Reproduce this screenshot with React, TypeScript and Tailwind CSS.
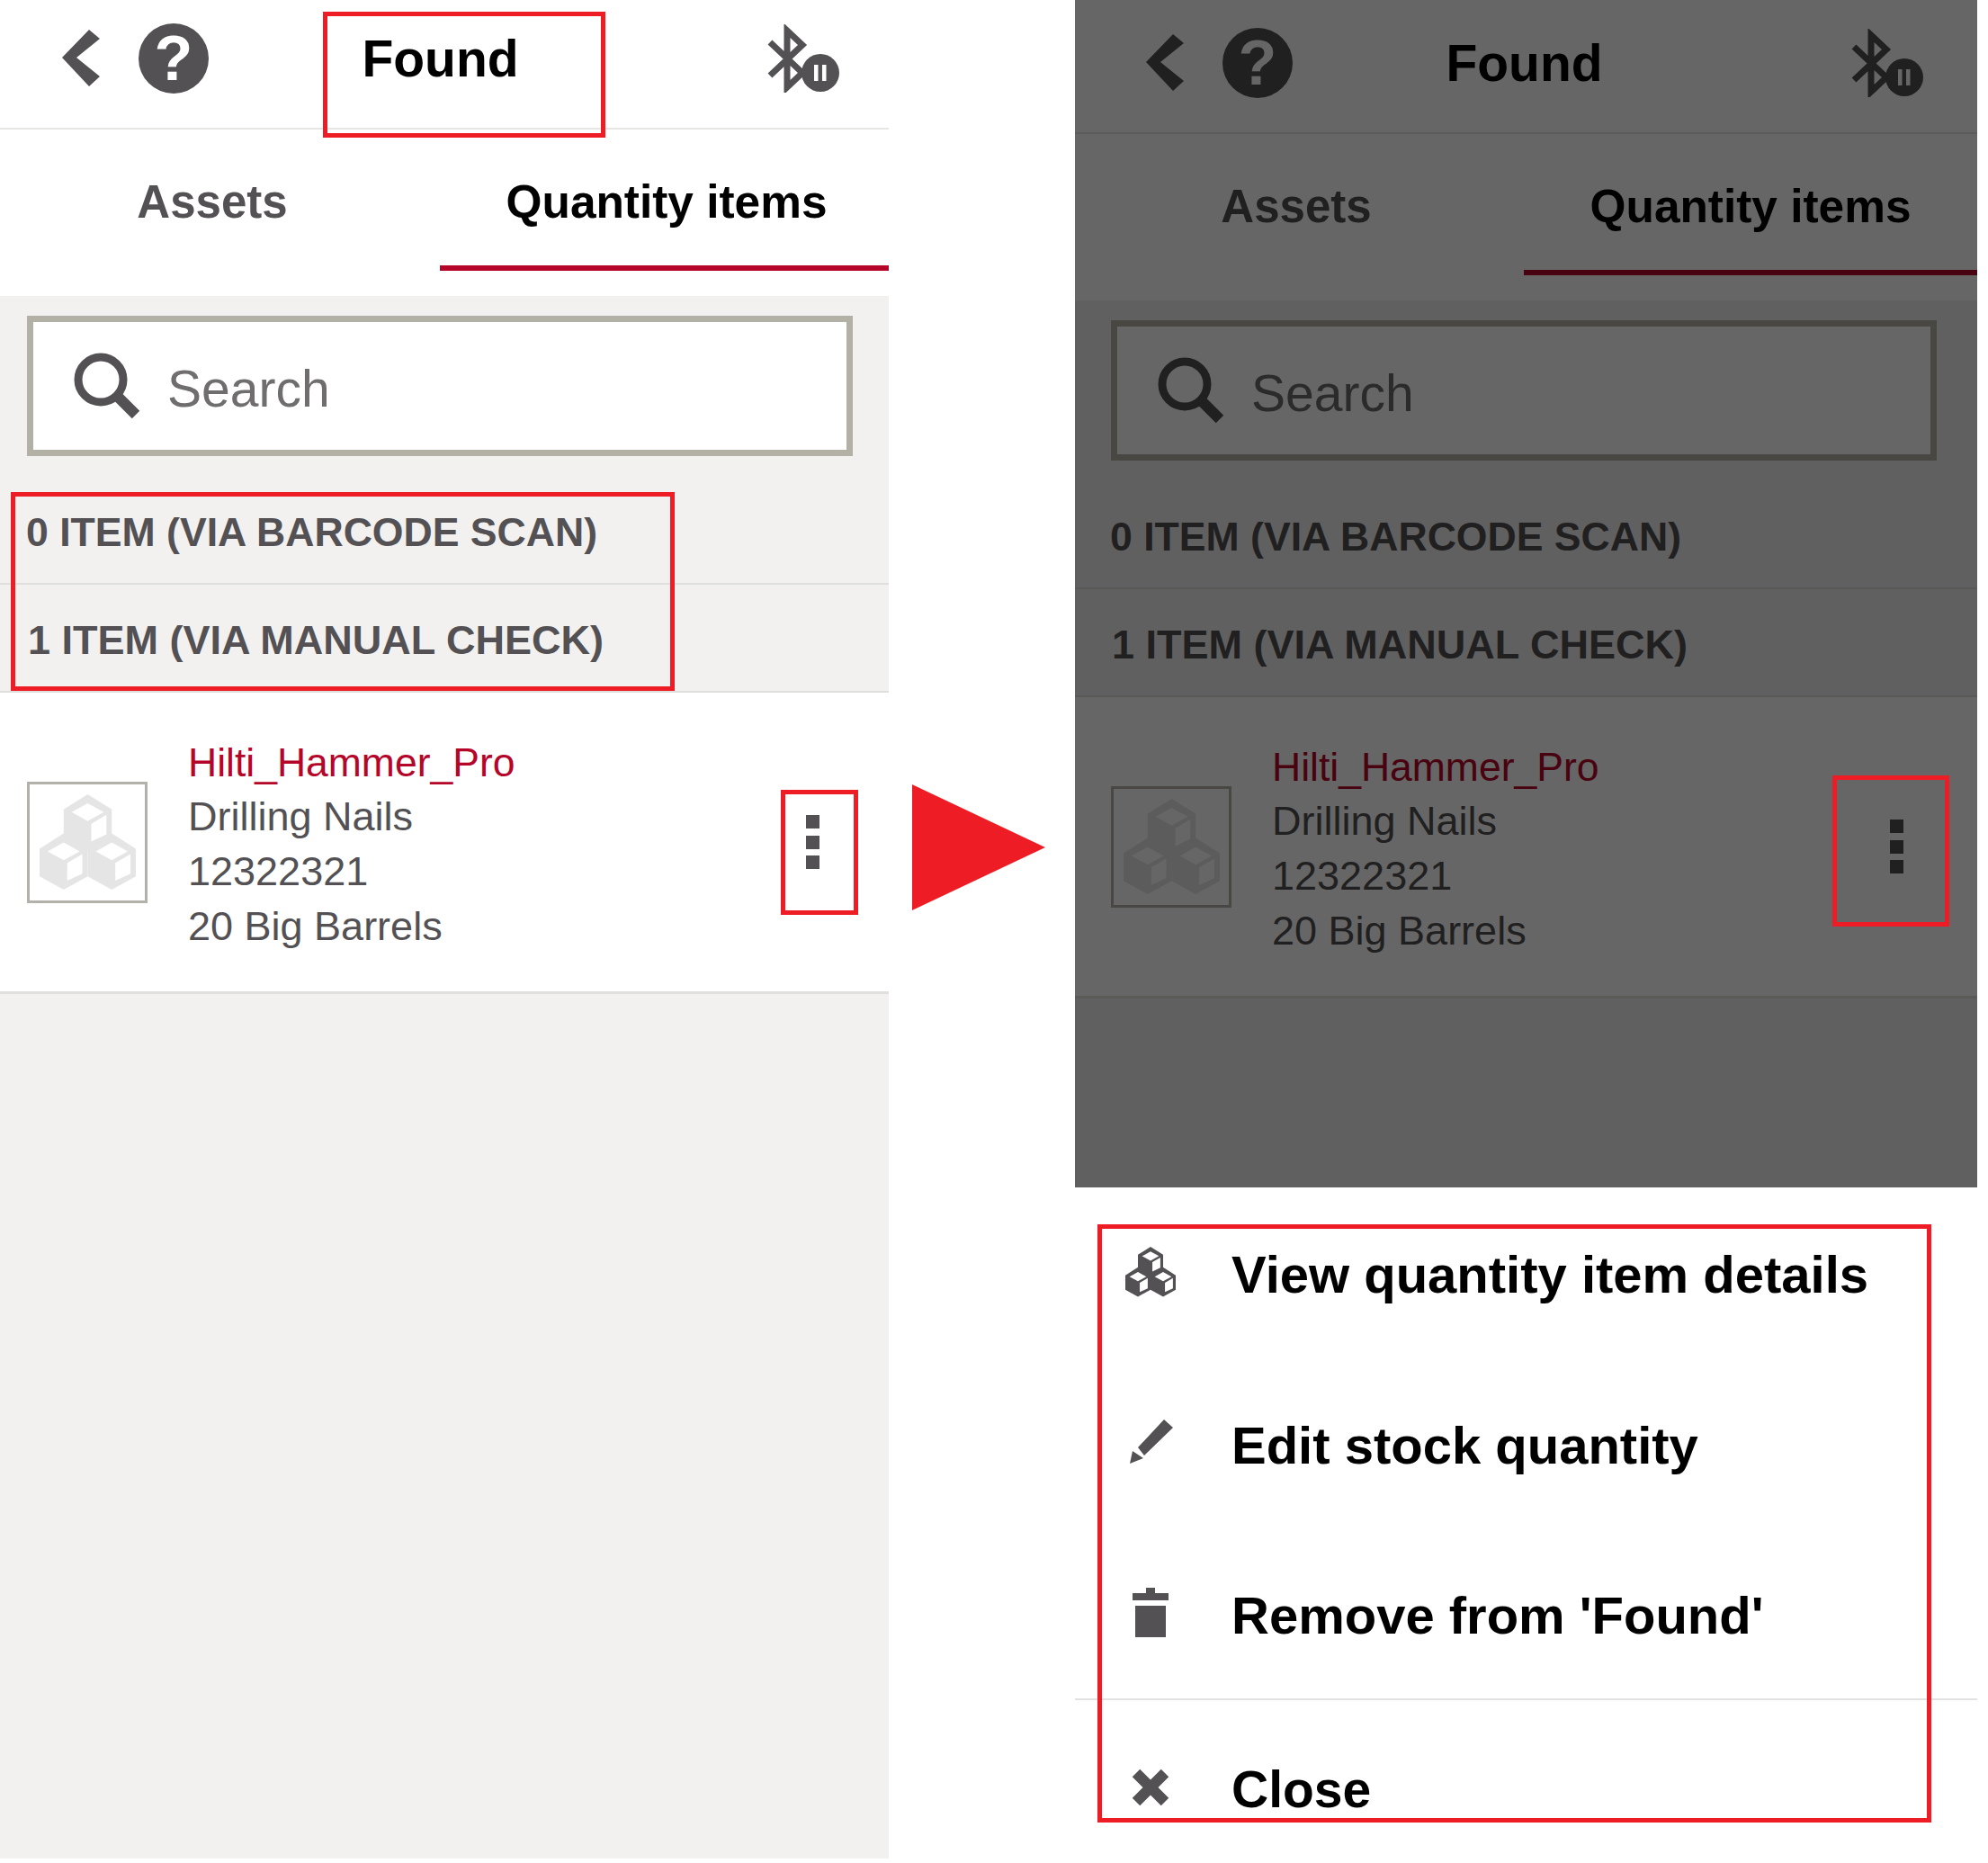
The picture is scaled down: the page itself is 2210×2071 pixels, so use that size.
import type { ReactNode } from 'react';

const INK = '#535154';

function Chevron() {
  return (
    <svg width="42" height="63" viewBox="0 0 42 63">
      <polygon points="30,0 42,10 16,31 42,52 30,63 0,31" fill={INK} />
    </svg>
  );
}

function Bluetooth() {
  return (
    <svg width="80" height="76" viewBox="0 0 80 76">
      <polyline points="3,20 39,54 22,70 22,7 39,23 3,57" fill="none" stroke={INK} strokeWidth="7" />
      <circle cx="59" cy="54" r="21" fill={INK} />
      <rect x="52" y="45" width="4.5" height="18" fill="#fff" />
      <rect x="61" y="45" width="4.5" height="18" fill="#fff" />
    </svg>
  );
}

function SearchGlass() {
  return (
    <svg width="74" height="74" viewBox="0 0 74 74">
      <circle cx="30" cy="30" r="25" fill="none" stroke={INK} strokeWidth="9" />
      <line x1="47" y1="47" x2="69" y2="69" stroke={INK} strokeWidth="12" />
    </svg>
  );
}

function Cube({ x, y, body, face }: { x: number; y: number; body: string; face: string }) {
  return (
    <g transform={`translate(${x} ${y})`}>
      <polygon points="27,0 54,17 54,48 27,63 0,48 0,17" fill={body} />
      <polygon points="27,10 45,20 27,30 9,20" fill={face} />
      <polygon points="31,33 48,23 48,45 31,53" fill={face} />
    </g>
  );
}

function Cubes({ size, body, face }: { size: number; body: string; face: string }) {
  return (
    <svg width={size} height={size} viewBox="0 0 108 108">
      <Cube x={27} y={0} body={body} face={face} />
      <Cube x={0} y={44} body={body} face={face} />
      <Cube x={54} y={44} body={body} face={face} />
    </svg>
  );
}

function Pencil() {
  return (
    <svg width="56" height="56" viewBox="0 0 56 56">
      <polygon points="43,2 53,11 21,42 14,33" fill={INK} />
      <polygon points="5,51 8,37 20,45" fill={INK} />
    </svg>
  );
}

function Trash() {
  return (
    <svg width="56" height="56" viewBox="0 0 56 56">
      <rect x="23" y="0" width="10" height="7" fill={INK} />
      <rect x="8" y="6" width="40" height="8" fill={INK} />
      <rect x="11" y="20" width="34" height="35" fill={INK} />
    </svg>
  );
}

function Cross() {
  return (
    <svg width="56" height="56" viewBox="0 0 56 56">
      <line x1="12" y1="12" x2="44" y2="44" stroke={INK} strokeWidth="12" />
      <line x1="44" y1="12" x2="12" y2="44" stroke={INK} strokeWidth="12" />
    </svg>
  );
}

// keeps the content of both phones on the same 988px frame, the row itself may run wider
function Row({ shifted, className, innerClassName, children }: { shifted: boolean; className?: string; innerClassName?: string; children: ReactNode }) {
  return (
    <div className={className}>
      <div className={`w-[988px] ${shifted ? 'ml-[10px]' : ''} ${innerClassName ?? ''}`}>{children}</div>
    </div>
  );
}

function Screen({ shifted = false }: { shifted?: boolean }) {
  return (
    <div className="flex h-full flex-col bg-[#f2f1ef]">
      <Row shifted={shifted} className={`bg-white border-b-2 border-[#e6e6e5] ${shifted ? 'pt-[5px]' : ''}`} innerClassName="grid h-[142px] grid-cols-3 items-center pb-[13px]">
        <div className="flex items-center gap-[43px] pl-[69px]">
          <Chevron />
          <div className="flex h-[78px] w-[78px] shrink-0 items-center justify-center rounded-full bg-[#535154] text-[70px] font-bold leading-none text-white">?</div>
        </div>
        <div className="pr-[9px] pt-[2px] text-center text-[57px] font-bold leading-none text-black">Found</div>
        <div className="flex justify-end pr-[55px]">
          <Bluetooth />
        </div>
      </Row>

      <Row shifted={shifted} className="bg-white pb-[28px]" innerClassName="grid h-[157px] grid-cols-[489px_499px]">
        <div className="flex items-center justify-center pr-[17px] pt-[6px] text-[51px] font-bold text-[#535154]">Assets</div>
        <div className={`flex items-center justify-center border-b-[6px] border-[#b5062a] pl-[5px] pt-[11px] text-[51.4px] font-bold text-black ${shifted ? 'mr-[-5px] pr-[5px]' : ''}`}>Quantity items</div>
      </Row>

      <Row shifted={shifted} innerClassName="px-[30px] pb-[23px] pt-[22px]">
        <div className="flex h-[156px] w-[918px] items-center border-[7px] border-[#b3b1a6] bg-white pl-[45px]">
          <SearchGlass />
          <span className="ml-[30px] pt-[8px] text-[57px] text-[#6f6d6e]">Search</span>
        </div>
      </Row>

      <Row shifted={shifted} className="border-b-2 border-[#dfdfdd]" innerClassName="flex h-[118px] items-center pl-[29px] pt-[6px] text-[44.6px] font-bold text-[#535154]">
        0 ITEM (VIA BARCODE SCAN)
      </Row>
      <Row shifted={shifted} className="border-b-2 border-[#dfdfdd]" innerClassName="flex h-[118px] items-center pl-[31px] pt-[6px] text-[45px] font-bold text-[#535154]">
        1 ITEM (VIA MANUAL CHECK)
      </Row>

      <Row shifted={shifted} className="border-b-[3px] border-[#e0e0de] bg-white" innerClassName="flex h-[332px] items-center pl-[30px] pr-[77px]">
        <div className="flex h-[135px] w-[134px] shrink-0 items-center justify-center border-[3px] border-[#b3b1aa]">
          <Cubes size={107} body="#e5e5e5" face="#ffffff" />
        </div>
        <div className="ml-[45px] pt-[6px] text-[45px] leading-[60.6px] text-[#535154]">
          <p className="text-[44.5px] text-[#b5062a]">Hilti_Hammer_Pro</p>
          <p>Drilling Nails</p>
          <p>12322321</p>
          <p>20 Big Barrels</p>
        </div>
        <div className="ml-auto flex flex-col gap-[7.5px]">
          <div className="h-[15px] w-[15px] bg-[#535154]" />
          <div className="h-[15px] w-[15px] bg-[#535154]" />
          <div className="h-[15px] w-[15px] bg-[#535154]" />
        </div>
      </Row>

      <div className="flex-1" />
    </div>
  );
}

function MenuItem({ icon, label, className }: { icon: ReactNode; label: string; className: string }) {
  return (
    <div className={`flex items-center font-bold text-black ${className}`}>
      <div className="mb-[6px] flex w-[174px] shrink-0 pl-[56px]">{icon}</div>
      <span>{label}</span>
    </div>
  );
}

export default function App() {
  return (
    <div className="flex h-[2071px] w-[2210px] overflow-hidden bg-white font-['Liberation_Sans',Arial,sans-serif]">
      {/* left phone */}
      <div className="relative h-[2066px] w-[988px] shrink-0">
        <Screen />
        <div className="absolute left-[359px] top-[13px] h-[140px] w-[314px] border-[5px] border-[#ee1c25]" />
        <div className="absolute left-[12px] top-[547px] h-[221px] w-[738px] border-[5px] border-[#ee1c25]" />
        <div className="absolute left-[868px] top-[878px] h-[139px] w-[86px] border-[5px] border-[#ee1c25]" />
      </div>

      {/* arrow */}
      <div className="w-[207px] shrink-0 pl-[26px] pt-[872px]">
        <svg width="148" height="140" viewBox="0 0 148 140">
          <polygon points="0,0 148,70 0,140" fill="#ee1c25" />
        </svg>
      </div>

      {/* right phone, dimmed with the menu below it */}
      <div className="relative w-[1015px] shrink-0">
        <div className="relative h-[1320px] w-[1003px] overflow-hidden">
          <Screen shifted />
          <div className="absolute inset-0 bg-black/60" />
        </div>
        <div className="w-[1003px]">
          <MenuItem icon={<Cubes size={56} body={INK} face="#ffffff" />} label="View quantity item details" className="h-[190px] pt-[3px] text-[58px]" />
          <MenuItem icon={<Pencil />} label="Edit stock quantity" className="h-[190px] pt-[3px] text-[58px]" />
          <MenuItem icon={<Trash />} label="Remove from 'Found'" className="h-[190px] border-b-2 border-[#e2e2e2] pt-[3px] text-[58px]" />
          <MenuItem icon={<Cross />} label="Close" className="h-[194px] pt-[6px] text-[57px]" />
        </div>
        <div className="absolute left-[842px] top-[862px] h-[168px] w-[130px] border-[5px] border-[#ee1c25]" />
        <div className="absolute left-[25px] top-[1361px] h-[665px] w-[927px] border-[5px] border-[#ee1c25]" />
      </div>
    </div>
  );
}
